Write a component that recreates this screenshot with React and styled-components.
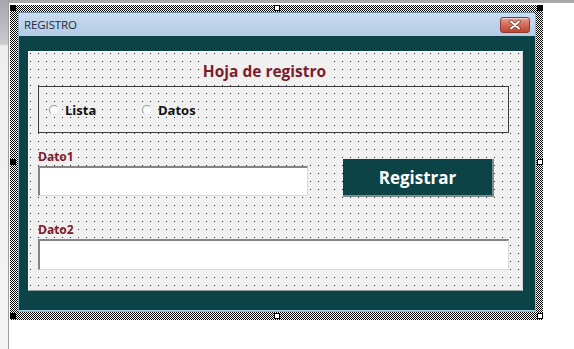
import React from "react";
import styled, { createGlobalStyle } from "styled-components";

const GlobalStyle = createGlobalStyle`
  html, body {
    margin: 0;
    padding: 0;
    background: #ffffff;
  }

  * {
    box-sizing: border-box;
  }
`;

const TEAL = "#0b4346";
const MAROON = "#7d1b2b";

const Screen = styled.div`
  display: flex;
  width: 574px;
  height: 349px;
  background: #ffffff;
  overflow: hidden;
  font-family: "Open Sans", "Noto Sans", sans-serif;
`;

const SideStrip = styled.div`
  width: 9px;
  flex: none;
  border-right: 1px solid #9c9c9c;
  background: linear-gradient(
    to bottom,
    #a6a6ac 0,
    #c9c9ce 44px,
    #eeeeee 46px,
    #f4f4f4 100%
  );
`;

const Workspace = styled.div`
  flex: 1;
  border-top: 3px solid #a9a9a9;
  padding: 2px 0 0 1px;
`;

const Selection = styled.div`
  position: relative;
  width: 533px;
  height: 315px;
  padding: 7px 7px 8px 8px;
  background: repeating-conic-gradient(#000 0 25%, #fff 0 50%) 0 0 / 2px 2px;
`;

const Handle = styled.span`
  position: absolute;
  width: 6px;
  height: 6px;
  background: ${props => (props.filled ? "#000" : "#fff")};
  border: 1px solid #000;
`;

const Window = styled.div`
  display: flex;
  flex-direction: column;
  height: 100%;
  border: 1px solid #8fb5cc;
  border-top-color: #6f8ea6;
  border-radius: 0 4px 0 0;
  background: ${TEAL};
`;

const TitleBar = styled.div`
  display: flex;
  align-items: center;
  justify-content: space-between;
  height: 24px;
  padding: 0 5px 0 5px;
  background: linear-gradient(to bottom, #c8daee 0%, #b4cbe5 100%);
`;

const Caption = styled.span`
  font-family: "Open Sans", "Noto Sans", sans-serif;
  font-size: 11.5px;
  color: #1d2940;
  letter-spacing: -0.1px;
`;

const CloseButton = styled.div`
  display: flex;
  align-items: center;
  justify-content: center;
  width: 30px;
  height: 16px;
  border: 1px solid #8b3b31;
  border-radius: 3px;
  background: linear-gradient(to bottom, #e4a092 0%, #d16a58 50%, #c2452f 100%);
  box-shadow: inset 0 1px 0 rgba(255, 255, 255, 0.45);
`;

const Body = styled.div`
  flex: 1;
  padding: 15px 12px 19px 9px;
  border-bottom: 1px solid #a6cde0;
`;

const Client = styled.div`
  height: 240px;
  padding: 9px 13px 0 9px;
  border: 1px solid;
  border-color: #ffffff #d0d6d6 #8e9c9c #ffffff;
  background-color: #f0f0f0;
  background-image: conic-gradient(at 1px 1px, transparent 75%, #2a2a2a 0);
  background-size: 8px 8px;
  background-position: 1px 1px;
`;

const Heading = styled.div`
  display: flex;
  justify-content: center;
  height: 20px;
  padding-right: 18px;
`;

const HeadingText = styled.span`
  padding: 0 4px;
  background: #f0f0f0;
  font-weight: 700;
  font-size: 15.5px;
  line-height: 20px;
  color: ${MAROON};
`;

const OptionFrame = styled.div`
  display: flex;
  align-items: center;
  height: 47px;
  margin-top: 5px;
  padding-left: 10px;
  border: 1px solid #3c3c3c;
`;

const Option = styled.label`
  display: flex;
  align-items: center;
  gap: 6px;
  width: ${props => props.width}px;
  font-weight: 700;
  font-size: 13px;
  color: #111;
`;

const RadioDot = styled.span`
  width: 10px;
  height: 10px;
  border-radius: 50%;
  border: 1px solid;
  border-color: #9a9a9a #ececec #ececec #9a9a9a;
  background: #fbfbfb;
`;

const InputRow = styled.div`
  display: grid;
  grid-template-columns: 270px 151px;
  column-gap: 35px;
  margin-top: 17px;
`;

const Field = styled.div`
  display: flex;
  flex-direction: column;
  gap: 2px;
  margin-top: ${props => props.offset || 0}px;
`;

const FieldLabel = styled.span`
  font-weight: 700;
  font-size: 12px;
  line-height: 14px;
  color: ${MAROON};
`;

const TextBox = styled.div`
  height: ${props => props.tall ? 31 : 30}px;
  background: #ffffff;
  border-top: 2px solid #858585;
  border-left: 2px solid #858585;
  border-right: 1px solid #dadada;
  border-bottom: 1px solid #dadada;
`;

const ActionButton = styled.div`
  align-self: end;
  display: flex;
  align-items: center;
  justify-content: center;
  height: 38px;
  margin-bottom: -1px;
  background: ${TEAL};
  border-right: 2px solid #7e8c8c;
  border-bottom: 2px solid #7e8c8c;
  color: #ffffff;
  font-weight: 700;
  font-size: 17px;
`;

const CloseIcon = () => (
  <svg width="12" height="10" viewBox="0 0 12 10">
    <path
      d="M2 1.5 L10 8.5 M10 1.5 L2 8.5"
      stroke="#7a2a20"
      strokeWidth="3.4"
      strokeLinecap="round"
    />
    <path
      d="M2 1.5 L10 8.5 M10 1.5 L2 8.5"
      stroke="#ffffff"
      strokeWidth="2"
      strokeLinecap="round"
    />
  </svg>
);

const App = () => {
  return (
    <>
      <GlobalStyle />
      <Screen>
        <SideStrip />
        <Workspace>
          <Selection>
            <Window>
              <TitleBar>
                <Caption>REGISTRO</Caption>
                <CloseButton>
                  <CloseIcon />
                </CloseButton>
              </TitleBar>
              <Body>
                <Client>
                  <Heading>
                    <HeadingText>Hoja de registro</HeadingText>
                  </Heading>
                  <OptionFrame>
                    <Option width={93}>
                      <RadioDot />
                      Lista
                    </Option>
                    <Option width={93}>
                      <RadioDot />
                      Datos
                    </Option>
                  </OptionFrame>
                  <InputRow>
                    <Field>
                      <FieldLabel>Dato1</FieldLabel>
                      <TextBox />
                    </Field>
                    <ActionButton>Registrar</ActionButton>
                  </InputRow>
                  <Field offset={27}>
                    <FieldLabel>Dato2</FieldLabel>
                    <TextBox tall />
                  </Field>
                </Client>
              </Body>
            </Window>
            <Handle filled style={{ left: 0, top: 0 }} />
            <Handle style={{ left: 264, top: 0 }} />
            <Handle filled style={{ right: 0, top: 0 }} />
            <Handle filled style={{ left: 0, top: 154 }} />
            <Handle style={{ right: 0, top: 154 }} />
            <Handle filled style={{ left: 0, bottom: 1 }} />
            <Handle style={{ left: 264, bottom: 1 }} />
            <Handle style={{ right: 0, bottom: 1 }} />
          </Selection>
        </Workspace>
      </Screen>
    </>
  );
};

export default App;
